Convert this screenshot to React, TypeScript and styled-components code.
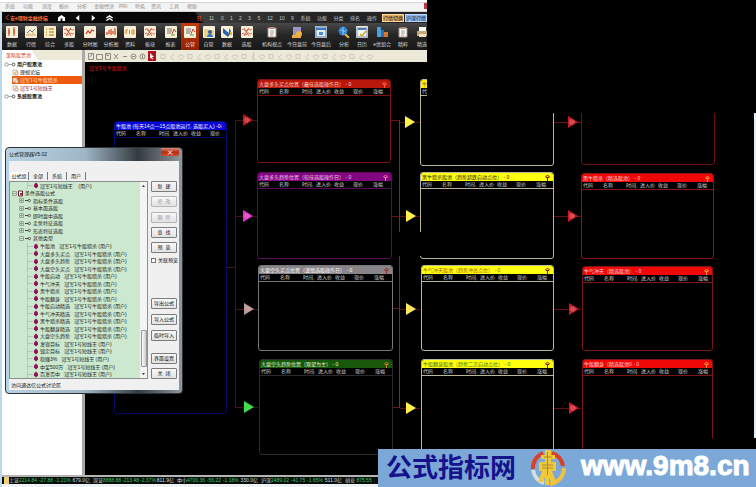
import React from 'react';
import styled, { createGlobalStyle, css } from 'styled-components';

const Global = createGlobalStyle`
  *, *::before, *::after { box-sizing: border-box; }
  html, body { margin: 0; background: #000; }
  body {
    font-family: "Liberation Sans", "Noto Sans CJK SC", sans-serif;
    font-size: 5px;
    line-height: 8px;
    color: #ddd;
    overflow: hidden;
  }
  button, input, table { font: inherit; color: inherit; }
  button { padding: 0; border: 0; background: none; white-space: nowrap; }
`;

const Shell = styled.div`
  position: relative;
  display: flex;
  flex-direction: column;
  min-height: 100vh;
  overflow: hidden;
`;

const Header = styled.header`
  max-width: 427px;
  overflow: hidden;
  white-space: nowrap;
`;

const MenuBar = styled.nav`
  display: flex;
  align-items: center;
  height: 12px;
  padding-left: 5px;
  background: linear-gradient(#fff 0 2px, #d8d8d8 2px 3px, #f3f3f3 3px);
  border-bottom: 1px solid #d5d5d5;
`;

const MenuItem = styled.button<{ $w: number }>`
  flex: 0 0 ${p => p.$w}px;
  text-align: left;
  color: #8c8c8c;
`;

const WindowClose = styled.button`
  width: 3px;
  height: 6px;
  margin-left: auto;
  background: #b9384a;
`;

const TitleBar = styled.div`
  display: flex;
  align-items: center;
  height: 11px;
  padding-left: 3px;
  background: linear-gradient(56deg, #070707 0 46%, #3c3c3c 47%, #242424 75%);
  border-left: 2px solid #cfe0ea;
`;

const Brand = styled.div`
  display: flex;
  align-items: center;
  gap: 1px;
  width: 50px;
  color: #ff7038;
  font-weight: bold;
`;

const NavButton = styled.button`
  flex: 0 0 16px;
  height: 10px;
  line-height: 0;
`;

const Quick = styled.div`
  display: flex;
  margin-left: 76px;
`;

const QuickItem = styled.button<{ $w: number; $hot?: boolean }>`
  flex: 0 0 ${p => p.$w}px;
  text-align: center;
  color: ${p => (p.$hot ? '#ff5418' : '#c9c9c9')};
`;

const Switch = styled.button<{ $blue?: boolean }>`
  flex: none;
  height: 8px;
  width: 22px;
  margin-left: 1px;
  line-height: 6px;
  color: #111;
  border: 1px solid ${p => (p.$blue ? '#bdd9ff' : '#ffd79a')};
  background: ${p => (p.$blue ? '#8db5e8' : '#e0ad68')};
`;

const ToolBar = styled.div`
  display: flex;
  height: 27px;
  background: linear-gradient(#484848, #262626 45%, #171717);
  border-left: 2px solid #cfe0ea;
`;

const Tool = styled.button<{ $w: number; $active?: boolean }>`
  flex: 0 0 ${p => p.$w}px;
  display: flex;
  flex-direction: column;
  align-items: center;
  padding-top: 3px;
  gap: 2px;
  color: #d6d6d6;
  overflow: visible;
  ${p => p.$active && css`background: linear-gradient(#c63a0c, #8f2206); color: #ffd9c0;`}
  svg { display: block; }
`;

const Body = styled.div`
  display: flex;
  flex: 1;
  min-height: 0;
`;

const Side = styled.aside`
  flex: 0 0 85px;
  background: #fff;
  border-left: 2px solid #bcd9ea;
  border-right: 3px solid #a9a9a9;
`;

const SideTab = styled.div`
  height: 10px;
  background: #ece9d8;
  line-height: 11px;
`;

const SideTabButton = styled.button`
  width: 36px;
  height: 10px;
  padding-left: 4px;
  text-align: left;
  color: #cf4c22;
  background: #fff;
  clip-path: polygon(0 0, 82% 0, 100% 100%, 0 100%);
`;

const Tree = styled.ul`
  margin: 0;
  padding: 0;
  list-style: none;
`;

const TreeItem = styled.li<{ $child?: boolean; $active?: boolean; $tint?: string }>`
  display: flex;
  align-items: center;
  gap: 1px;
  height: 8px;
  margin-left: ${p => (p.$child ? 10 : 2)}px;
  white-space: nowrap;
  color: ${p => p.$tint || '#111'};
  font-weight: ${p => (p.$child ? 400 : 700)};
  ${p => p.$active && css`background: #ee5a0c;`}
`;

const Work = styled.main`
  flex: 1;
  min-width: 0;
  display: flex;
  flex-direction: column;
`;

const DrawBar = styled.div`
  display: flex;
  align-items: center;
  height: 12px;
  max-width: 342px;
  background: #ece9d8;
  overflow: hidden;
  svg { display: block; flex: none; }
`;

const Canvas = styled.section`
  position: relative;
  flex: 1;
  margin-left: 1px;
  background: #000;
  overflow: hidden;
`;

const PoolName = styled.h1`
  margin: 0;
  padding: 2px 3px;
  font-size: 5px;
  font-weight: 400;
  line-height: 8px;
  color: #e01414;
`;

const Wires = styled.svg`
  position: absolute;
  left: 0;
  top: 0;
`;

const Node = styled.article<{ $x: number; $y: number; $w: number; $h: number; $line: string }>`
  position: absolute;
  left: ${p => p.$x}px;
  top: ${p => p.$y}px;
  width: ${p => p.$w}px;
  height: ${p => p.$h}px;
  border: 1px solid ${p => p.$line};
  border-radius: 3px;
  overflow: hidden;
`;

const NodeTitle = styled.header<{ $bg: string; $ink: string }>`
  display: flex;
  align-items: center;
  justify-content: space-between;
  height: 8px;
  padding: 0 3px 0 1px;
  background: ${p => p.$bg};
  color: ${p => p.$ink};
  white-space: nowrap;
`;

const NodeTable = styled.table<{ $line: string }>`
  table-layout: fixed;
  width: 100%;
  border-collapse: collapse;
  border-bottom: 1px solid ${p => p.$line};
  th {
    height: 7px;
    padding: 0 0 0 1px;
    font-weight: 400;
    line-height: 7px;
    text-align: left;
    white-space: nowrap;
    color: #cfcfcf;
  }
`;

const Cover = styled.div<{ $x: number; $y: number; $w: number; $h: number }>`
  position: absolute;
  left: ${p => p.$x}px;
  top: ${p => p.$y}px;
  width: ${p => p.$w}px;
  height: ${p => p.$h}px;
  background: #000;
`;

const Edge = styled.div`
  position: absolute;
  right: 0;
  top: 51px;
  bottom: 37px;
  width: 2px;
  background: #e4eef2;
`;

const Footer = styled.footer`
  display: flex;
  align-items: center;
  height: 12px;
  padding-left: 2px;
  background: linear-gradient(#b5b5b5 0 2px, #0b0f0b 2px 9px, #eef3f6 9px);
  border-left: 2px solid #bcd9ea;
  line-height: 7px;
  white-space: nowrap;
  overflow: hidden;
`;

const Flag = styled.i`
  width: 5px;
  height: 7px;
  margin-bottom: 1px;
  background: #f3cf74;
`;

const Quote = styled.span`
  flex: 0 0 84px;
  display: flex;
  justify-content: space-between;
  padding-right: 3px;
  padding-bottom: 1px;
  color: #d8d8d8;
`;

const Down = styled.b`
  font-weight: 400;
  color: #35c463;
`;

const Dialog = styled.section`
  position: absolute;
  left: 5px;
  top: 147px;
  width: 178px;
  height: 247px;
  display: flex;
  flex-direction: column;
  padding: 0 3px 3px;
  border: 1px solid #2e3336;
  border-radius: 4px;
  color: #111;
  background: linear-gradient(90deg, #b9d3e4, #9fb6c6 45%, #343b40 75%, #8f989e);
`;

const DialogBar = styled.header`
  display: flex;
  justify-content: space-between;
  height: 13px;
  line-height: 12px;
  color: #0b1a26;
`;

const DialogClose = styled.button`
  width: 18px;
  height: 8px;
  line-height: 0;
  border-radius: 0 0 2px 2px;
  background: linear-gradient(#d98a78, #b92c14 50%, #d2492c);
`;

const DialogBody = styled.div`
  flex: 1;
  display: flex;
  flex-direction: column;
  padding: 11px 2px 0 0;
  background: #f0f0f0;
`;

const Tabs = styled.div`
  display: flex;
  height: 9px;
  padding-left: 1px;
`;

const Tab = styled.button<{ $active?: boolean }>`
  width: 19px;
  height: 8px;
  border-right: 1px solid #777;
  ${p => p.$active && css`background: #fafafa;`}
`;

const DialogMain = styled.div`
  display: flex;
  height: 198px;
  gap: 3px;
`;

const ListBox = styled.div`
  flex: 1;
  display: flex;
  border: 1px solid #8b8f94;
  background: #cce8cf;
`;

const Formulas = styled.ul`
  flex: 1;
  display: flex;
  flex-direction: column;
  margin: 0;
  padding: 0;
  list-style: none;
`;

const Formula = styled.li<{ $level: number }>`
  flex: 1;
  min-height: 0;
  display: flex;
  align-items: center;
  gap: 2px;
  padding-left: ${p => [1, 8, 16][p.$level]}px;
  white-space: pre;
  color: #1c241d;
`;

const Scroll = styled.div`
  width: 7px;
  display: flex;
  flex-direction: column;
  align-items: center;
  justify-content: space-between;
  background: #f4f4f4;
  svg { display: block; }
`;

const Thumb = styled.div`
  width: 6px;
  height: 37px;
  margin-top: auto;
  margin-bottom: 4px;
  border: 1px solid #999;
  border-radius: 1px;
  background: linear-gradient(90deg, #fafafa, #ccc);
`;

const Actions = styled.div`
  width: 26px;
  display: flex;
  flex-direction: column;
`;

const Group = styled.div<{ $h: number; $gap?: number }>`
  display: flex;
  flex-direction: column;
  justify-content: space-between;
  height: ${p => p.$h}px;
  margin-bottom: ${p => p.$gap || 0}px;
`;

const Action = styled.button`
  height: 11px;
  line-height: 9px;
  border: 1px solid #7c7c7c;
  border-radius: 1px;
  background: linear-gradient(#f8f8f8, #e2e2e2);
  color: #111;
  white-space: pre;
  &:disabled { color: #999; border-color: #b5b5b5; }
`;

const Check = styled.label`
  display: flex;
  align-items: center;
  gap: 2px;
  height: 8px;
  margin: 3px 0 34px;
  white-space: nowrap;
  input {
    appearance: none;
    flex: none;
    width: 5px;
    height: 5px;
    margin: 0;
    border: 1px solid #777;
    background: #fff;
  }
`;

const DialogStatus = styled.footer`
  padding: 2px 0 0 2px;
`;

const Banner = styled.a`
  position: absolute;
  right: 0;
  bottom: 0;
  display: flex;
  align-items: center;
  width: 378px;
  height: 38px;
  padding-left: 8px;
  background: #7ca8d8;
  text-decoration: none;
  line-height: 36px;
  white-space: nowrap;
`;

const BannerName = styled.strong`
  width: 143px;
  font-family: "Noto Sans CJK SC", sans-serif;
  font-size: 26px;
  line-height: 30px;
  padding-bottom: 4px;
  color: #15128c;
`;

const BannerUrl = styled.strong`
  margin-left: 14px;
  font-size: 28px;
  line-height: 34px;
  padding-bottom: 4px;
  color: #fff;
  -webkit-text-stroke: 1px #fff;
`;

type Kind = string;

const tileArt: Record<Kind, React.ReactNode> = {
  candle: <><path d="M3 2v8M8 1v9" stroke="#d23a1e" /><path d="M2 4h2v4H2zM7 3h2v5H7z" fill="#d96a3c" /></>,
  line: <><path d="M2 7l3-3 2 2 3-3" stroke="#777" /><path d="M2 10V8M4 10V7M6 10V8M8 10V6M10 10V8" stroke="#d5a35c" /></>,
  list: <path d="M2 3h1M5 3h5M2 6h1M5 6h5M2 9h1M5 9h5" stroke="#c99a20" strokeWidth="1.4" />,
  wave: <path d="M1 4c2-3 3 3 5 0s3 2 5-1M1 8c2-3 3 3 5 0s3 2 5-1M3 2l5 8M8 2L3 10" stroke="#c4442c" strokeWidth=".8" />,
  rise: <path d="M2 8l2-3 2 2 2-3 2 1" stroke="#d0391e" strokeWidth="1.2" />,
  bars: <path d="M2 9V6M4 8V4M6 9V3M8 8V5M10 9V2" stroke="#d23c20" strokeWidth="1.2" />,
  page: <path d="M2 4v4M2 4h2M2 6h1M5.500 4v4M8 4h2v4H8z" stroke="#d08a20" />,
  note: <><path d="M2 3h5M2 5h5M2 7h4" stroke="#777" /><path d="M7 8l2-5 2 3" stroke="#cf4224" /><path d="M6 9h4" stroke="#4f9d41" /></>,
  user: <><path d="M1 3h4l1 1h5v7H1z" fill="#ead28a" /><circle cx="7" cy="6" r="2" fill="#315f9c" /><path d="M4 11c0-4 6-4 6 0z" fill="#3675c5" /></>,
  bird: <><path d="M2 2l7 6-2 3-5-4zM8 2l2 3-2 5" fill="#2866b0" /><path d="M9 6h2v3H9z" fill="#edb53e" /></>,
  clip: <><path d="M2 2h8v9H2z" fill="#fff" stroke="#b08a7a" /><path d="M4 5h4M4 7h4M4 9h3" stroke="#998" /><path d="M4 1h4v2H4z" fill="#ad8a78" /></>,
  picture: <><path d="M2 1h8v8H2z" fill="#9a95c4" /><circle cx="8" cy="8" r="3" fill="#f2b43d" /><path d="M1 9h9v3H1z" fill="#edab48" /></>,
  calendar: <><path d="M1 1h10v10H1z" fill="#e4eef9" stroke="#4a79b5" /><path d="M1 2h10v2H1z" fill="#3e78be" /><path d="M4 6h4v3H4z" fill="#4e8bd2" /></>,
  globe: <><circle cx="5" cy="5" r="4.5" fill="#2f7fc9" /><path d="M2 5c2-4 4 4 6-1M5 1v8" stroke="#8dd4ff" /><path d="M7 8l4 4" stroke="#e9b94d" strokeWidth="2" /></>,
  plan: <><path d="M1 2h10v9H1z" fill="#f7f7f7" stroke="#718db8" /><path d="M2 3h8" stroke="#507dc0" strokeWidth="2" /><path d="M4 8l2 2 4-5" stroke="#d3a21e" strokeWidth="1.5" /></>,
  blocks: <><path d="M1 1h4v10H1z" fill="#4aa1d8" /><path d="M5 4h3v7H5z" fill="#2f6fb5" /><path d="M8 6h4v5H8z" fill="#d8742c" /></>,
  printer: <><path d="M3 1h7v5H3z" fill="#fff" /><path d="M1 5h11v5H1z" fill="#c8a878" /><path d="M3 8h7v3H3z" fill="#f3e3bb" /></>,
};

const bare = ['picture', 'globe', 'blocks', 'printer', 'clip'];

function ToolIcon({ kind }: { kind: Kind }) {
  return (
    <svg width="12" height="12" viewBox="0 0 12 12" fill="none" aria-hidden="true">
      {!bare.includes(kind) && <rect width="12" height="12" rx="1" fill="#f8efd9" />}
      {tileArt[kind]}
    </svg>
  );
}

const menu: [string, number][] = [['系统', 18], ['功能', 19], ['深度', 17], ['报价', 18], ['分析', 17], ['金融经济', 25], ['PRI', 16], ['特色', 16], ['资讯', 18], ['工具', 18], ['帮助', 12]];

const quick: [string, number][] = [['日', 12], ['11', 13], ['0', 9], ['1', 9], ['2', 9], ['3', 9], ['5', 10], ['12', 12], ['10', 12], ['9', 9], ['系统', 17], ['功能', 16], ['分类', 17], ['排名', 16], ['操作', 18]];

const tools: [string, Kind, number][] = [
  ['数据', 'candle', 20], ['行情', 'line', 18], ['综合', 'list', 20], ['多股', 'wave', 18],
  ['分时图', 'rise', 24], ['分析图', 'bars', 18], ['资料', 'page', 20], ['板块', 'wave', 20],
  ['报表', 'note', 21], ['公管', 'note', 18], ['自管', 'user', 19], ['数据', 'bird', 18],
  ['选股', 'wave', 21], ['机构视点', 'clip', 30], ['今日盘前', 'picture', 20], ['今日盘后', 'calendar', 28],
  ['分析', 'globe', 18], ['日历', 'plan', 18], ['e优组合', 'blocks', 22], ['精粹', 'clip', 20], ['精选', 'printer', 18],
];

const cols = ['代码', '名称', '时间,', '进入价', '收益', '现价', '涨幅'];
const colWidths = [20, 23, 14, 18, 19, 20, 18];

interface Pool { t: string; x: number; y: number; w: number; h: number; bg: string; line: string; ink?: string; mark?: string; short?: boolean }

const pools: Pool[] = [
  { t: '牛股池 (每天14点—15点股池运行, 选股买入) -0', x: 28, y: 59, w: 113, h: 293, bg: '#0707d8', line: '#080866', ink: '#fff', mark: '#ff7080', short: true },
  { t: '大盘多头买点位置（最佳选股操作日） - 0', x: 171, y: 17, w: 134, h: 84, bg: '#b8180c', line: '#7d1010', ink: '#ffd5cc', mark: '#ff6048' },
  { t: '大盘多头趋势位置（较佳选股操作日） - 0', x: 171, y: 110, w: 135, h: 87, bg: '#820680', line: '#5c0a5c', ink: '#f5c8f2', mark: '#ff6f9f' },
  { t: '大盘空头买点位置（谨慎选股操作日） - 0', x: 172, y: 203, w: 135, h: 86, bg: '#888487', line: '#777', ink: '#fff', mark: '#a32222' },
  { t: '大盘空头趋势位置（观望为主） - 0', x: 173, y: 297, w: 134, h: 96, bg: '#17580b', line: '#2b2b2b', ink: '#e2f5d8', mark: '#d07a2a' },
  { t: '牛股启动股池（趋势启动点位） - 0', x: 334, y: 17, w: 134, h: 87, bg: '#fff200', line: '#b9b796', ink: '#8c5c10', mark: '#b02010' },
  { t: '黑牛猎杀股池（趋势超跌启动点位） - 0', x: 334, y: 110, w: 134, h: 87, bg: '#ffff10', line: '#b9b796', ink: '#222', mark: '#8a1010' },
  { t: '牛气冲天股池（趋势冲高点位） - 0', x: 335, y: 203, w: 133, h: 86, bg: '#ffff10', line: '#b9b796', ink: '#a4571b', mark: '#a01010' },
  { t: '牛股翻身股池（趋势二次启动点位） - 0', x: 335, y: 297, w: 133, h: 100, bg: '#ffff10', line: '#b9b796', ink: '#38721b', mark: '#a01010' },
  { t: '牛股启动（精选股池） - 0', x: 495, y: 17, w: 134, h: 86, bg: '#f00808', line: '#6b1212', ink: '#ffd5d0' },
  { t: '黑牛猎杀（精选股池） - 0', x: 495, y: 111, w: 133, h: 86, bg: '#f00808', line: '#8c1414', ink: '#ffd5d0', mark: '#ff9a3c' },
  { t: '牛气冲天（精选股池） - 0', x: 496, y: 204, w: 131, h: 85, bg: '#f00808', line: '#7a1616', ink: '#ffd5d0', mark: '#ff9a3c' },
  { t: '牛股翻身（精选股池0 - 0', x: 496, y: 297, w: 131, h: 100, bg: '#f00808', line: '#7a1616', ink: '#ffd5d0', mark: '#ff9a3c' },
];

const arrows: [number, number, string, boolean][] = [
  [158, 58, '#b8161c', true], [158, 154, '#e030d8', true], [159, 247, '#b39a9c', true], [159, 345, '#42dc4c', false],
  [320, 60, '#fff04a', false], [321, 154, '#fff04a', false], [321, 247, '#ffe860', false], [321, 346, '#fff04a', false],
  [483, 60, '#c81a24', true], [483, 154, '#c81a24', true], [484, 247, '#c81a24', true], [484, 346, '#c81a24', true],
];

function PoolNode({ p }: { p: Pool }) {
  const shown = p.short ? cols.slice(0, 6) : cols;
  return (
    <Node $x={p.x} $y={p.y} $w={p.w} $h={p.h} $line={p.line}>
      <NodeTitle $bg={p.bg} $ink={p.ink || '#fff'}>
        <span>{p.t}</span>
        {p.mark && (
          <svg width="5" height="7" viewBox="0 0 5 7" fill="none" stroke={p.mark}>
            <path d="M.5 3L2.5 1l2 2-2 1zM2.5 3v4" />
          </svg>
        )}
      </NodeTitle>
      <NodeTable $line={p.line}>
        <colgroup>{shown.map((c, i) => <col key={c} width={i === shown.length - 1 ? undefined : colWidths[i]} />)}</colgroup>
        <thead><tr>{shown.map(c => <th key={c} scope="col">{c}</th>)}</tr></thead>
      </NodeTable>
    </Node>
  );
}

function Connectors() {
  return (
    <Wires width="670" height="413" fill="none" aria-hidden="true">
      <path d="M141 205.500h8M149.500 58v287M149 58.500h22M149 154.500h22M149 247.500h23M149 345.500h23" stroke="#45140c" />
      <path d="M305 58.500h9M306 154.500h8M307 246.500h7M307 345.500h7" stroke="#6a1010" />
      <path d="M313.500 58v288" stroke="#b01414" />
      <path d="M314 60.500h20M314 154.500h20M314 247.500h20M314 346.500h20" stroke="#571010" />
      <path d="M468 60.500h27M468 154.500h27M468 247.500h27M468 346.500h27" stroke="#641010" />
      {arrows.map(([x, y, c, g], i) => (
        <g key={i}>
          <path d={`M${x - 1} ${y - 6}l10 6-10 6z`} fill={c} />
          {g && <path d={`M${x + 1} ${y - 2}h3v4h-3zM${x + 1} ${y}h5`} stroke="#f3a0a0" strokeWidth=".5" />}
        </g>
      ))}
    </Wires>
  );
}

const g1 = '冠军1号牛股猎杀 (用户)';
const g2 = '冠军1号短线王 (用户)';
const formulas: [number, string][] = [
  [2, '冠军1号短线王    (用户)'], [0, '条件选股公式'], [1, '指标条件选股'], [1, '基本面选股'], [1, '即时盘中选股'],
  [1, '走势特征选股'], [1, '形态特征选股'], [1, '其他类型'],
  ...['牛股池', '大盘多头买点', '大盘多头趋势', '大盘空头买点', '牛股启动', '牛气冲天', '黑牛猎杀', '牛股翻身', '牛股启动精选', '牛气冲天精选', '黑牛猎杀精选', '牛股翻身精选', '大盘空头趋势'].map(n => [2, `${n}   ${g1}`] as [number, string]),
  ...['发现目标', '锁定目标', '稳赚3%', '中奖500万', '百发百中'].map(n => [2, `${n}   ${g2}`] as [number, string]),
];

function TreeGlyph({ level, open }: { level: number; open?: boolean }) {
  if (level === 2) {
    return (
      <svg width="12" height="7" viewBox="0 0 12 7" fill="none">
        <path d="M1.500 0v7M2 3.500h5" stroke="#9fb3a1" strokeWidth=".6" />
        <path d="M10 .5l2 2v2l-2 2-2-2v-2z" fill="#8c1458" />
      </svg>
    );
  }
  if (level === 0) {
    return (
      <svg width="12" height="7" viewBox="0 0 12 7" fill="none">
        <path d="M1.500 1.500h4v4h-4zM2 3.500h3" stroke="#7e8c80" strokeWidth=".7" />
        <path d="M7.500 1h4v5h-4z" fill="#fff" stroke="#632028" /><path d="M9 3h2v2H9z" fill="#c02030" />
      </svg>
    );
  }
  return (
    <svg width="13" height="7" viewBox="0 0 13 7" fill="none">
      <path d={`M1.500 1.500h4v4h-4zM2 3.500h3${open ? '' : 'M3.500 2v3'}`} stroke="#7e8c80" strokeWidth=".7" />
      <path d="M7 3.500h3" stroke="#444" /><circle cx="11.300" cy="3.500" r="1.200" stroke="#444" strokeWidth=".8" />
    </svg>
  );
}

function FormulaDialog() {
  return (
    <Dialog role="dialog" aria-label="公式管理器">
      <DialogBar>
        <span>公式管理器V5.02</span>
        <DialogClose aria-label="关闭">
          <svg width="6" height="5" viewBox="0 0 6 5"><path d="M1 .5l4 4M5 .5l-4 4" stroke="#fff" /></svg>
        </DialogClose>
      </DialogBar>
      <DialogBody>
        <Tabs role="tablist">
          {['公式组', '全部', '系统', '用户'].map((t, i) => <Tab key={t} role="tab" $active={i === 0}>{t}</Tab>)}
        </Tabs>
        <DialogMain>
          <ListBox>
            <Formulas>
              {formulas.map(([l, t]) => (
                <Formula key={t} $level={l}><TreeGlyph level={l} open={t === '其他类型'} />{t}</Formula>
              ))}
            </Formulas>
            <Scroll>
              <svg width="7" height="8" viewBox="0 0 7 8"><path d="M2 5l1.500-2L5 5z" fill="#333" /></svg>
              <Thumb />
              <svg width="7" height="7" viewBox="0 0 7 7"><path d="M2 2l1.500 2L5 2z" fill="#333" /></svg>
            </Scroll>
          </ListBox>
          <Actions>
            <Group $h={72}>
              <Action>新  建</Action>
              <Action disabled>修  改</Action>
              <Action disabled>删  除</Action>
              <Action>查  找</Action>
              <Action>预  览</Action>
            </Group>
            <Check><input type="checkbox" />关联预览</Check>
            <Group $h={43} $gap={12}>
              <Action>导出公式</Action>
              <Action>导入公式</Action>
              <Action>临时导入</Action>
            </Group>
            <Group $h={26}>
              <Action>界面设置</Action>
              <Action>关  闭</Action>
            </Group>
          </Actions>
        </DialogMain>
        <DialogStatus>访问通达信公式讨论区</DialogStatus>
      </DialogBody>
    </Dialog>
  );
}

function KeyGlyph() {
  return (
    <svg width="12" height="7" viewBox="0 0 12 7" fill="none">
      <path d="M1 2h3v3H1zM4 3.500h4" stroke="#999" strokeWidth=".8" /><circle cx="9.500" cy="3.500" r="1.400" stroke="#555" />
    </svg>
  );
}

function LeafGlyph() {
  return (
    <svg width="7" height="7" viewBox="0 0 7 7" fill="none">
      <path d="M1 1h4v4H1z" fill="#fff" stroke="#b9a184" strokeWidth=".8" /><path d="M3 3h3v3H3z" fill="#f8f0e0" stroke="#c59876" strokeWidth=".8" />
    </svg>
  );
}

const quotes: [string, string, string, string, string][] = [
  ['上证', '2214.84', '-27.88', '-1.21%', '679.0亿'],
  ['深证', '8888.88', '-213.48', '-2.37%', '811.9亿'],
  ['中小', '4700.36', '-56.22', '-1.18%', '330.0亿'],
  ['沪深', '2489.02', '-41.75', '-1.65%', '511.0亿'],
];

const navPaths = ['M1 4l4-3 4 3v4H6V5H4v3H1z', 'M7 1v7L3 4.500z', 'M3 1v7l4-3.500z', 'M1 4l4-3 4 3-1 1-3-2-3 2zM1 7l4-3 4 3-1 1-3-2-3 2z'];
const navLabels = ['主页', '后退', '前进', '置顶'];

export default function App() {
  return (
    <Shell>
      <Global />
      <Header>
        <MenuBar>
          {menu.map(([t, w]) => <MenuItem key={t} $w={w}>{t}</MenuItem>)}
          <WindowClose aria-label="关闭窗口" />
        </MenuBar>
        <TitleBar>
          <Brand>
            <svg width="4" height="7" viewBox="0 0 4 7"><path d="M4 .5L1 3.500l3 3" fill="none" stroke="#e04c20" /></svg>
            安e理财金融终端
          </Brand>
          {navPaths.map((d, i) => (
            <NavButton key={d} aria-label={navLabels[i]}>
              <svg width="9" height="8" viewBox="0 0 10 9"><path d={d} fill="#fff" /></svg>
            </NavButton>
          ))}
          <Quick>
            {quick.map(([t, w], i) => <QuickItem key={t} $w={w} $hot={i === 0}>{t}</QuickItem>)}
          </Quick>
          <Switch>行情切换</Switch>
          <Switch $blue>沪深行情</Switch>
        </TitleBar>
        <ToolBar>
          {tools.map(([t, k, w], i) => (
            <Tool key={i} $w={w} $active={t === '公管'}><ToolIcon kind={k} />{t}</Tool>
          ))}
        </ToolBar>
      </Header>
      <Body>
        <Side>
          <SideTab><SideTabButton>策略股票池</SideTabButton></SideTab>
          <Tree>
            <TreeItem><KeyGlyph />用户股票池</TreeItem>
            <TreeItem $child><LeafGlyph />理想论坛</TreeItem>
            <TreeItem $child $active $tint="#ffe2c4"><LeafGlyph />冠军1号牛股猎杀</TreeItem>
            <TreeItem $child $tint="#a02818"><LeafGlyph />冠军1号短线王</TreeItem>
            <TreeItem><KeyGlyph />系统股票池</TreeItem>
          </Tree>
        </Side>
        <Work>
          <DrawBar>
            <svg width="342" height="12" viewBox="0 0 342 12" fill="none">
              <g stroke="#8e8b80">
                <path d="M3.500 3.500h5v6h-5zM5 7l3-4M11.500 4.500h6v5h-6zM20.500 3.500h5v6h-5zM22 3.500v2h2M29 4l4 5M33 4l-4 5M38 6.500h4" />
                <circle cx="48.500" cy="6.500" r="2.500" /><circle cx="57.500" cy="6.500" r="2.500" /><path d="M47 6.500h3M57.500 5v3" />
              </g>
              <path d="M63 1h8v10h-8z" fill="#b3121c" /><path d="M65 3l4 4h-2l1 2-1 .5-1-2-1 1z" fill="#fff" />
              <g stroke="#cbc8ba">
                {Array.from({ length: 24 }, (_, i) => (
                  <path key={i} d={i % 3 === 0 ? `M${76 + i * 9} 4.500h4v4h-4z` : i % 3 === 1 ? `M${76 + i * 9} 8l4-4M${77 + i * 9} 9h3` : `M${75 + i * 9} 6.500l3-2 3 2-3 3z`} />
                ))}
                <path d="M168.500 2v8" />
              </g>
            </svg>
          </DrawBar>
          <Canvas>
            <PoolName>冠军1号牛股猎杀</PoolName>
            <Connectors />
            {pools.map(p => <PoolNode key={p.t} p={p} />)}
            <Cover $x={341} $y={0} $w={329} $h={51} />
            <Cover $x={307} $y={170} $w={74} $h={24} />
            <Cover $x={500} $y={376} $w={170} $h={37} />
            <Edge />
          </Canvas>
        </Work>
      </Body>
      <Footer>
        <Flag />
        {quotes.map(q => (
          <Quote key={q[0]}><span>{q[0]}<Down>{q[1]}</Down></span><Down>{q[2]}</Down><Down>{q[3]}</Down><span>{q[4]}</span></Quote>
        ))}
        <Quote><span>创业 <Down>875.55</Down></span></Quote>
      </Footer>
      <FormulaDialog />
      <Banner href="#home">
        <BannerName>公式指标网</BannerName>
        <svg width="38" height="38" viewBox="0 0 38 38" fill="none" aria-hidden="true">
          <g strokeWidth="4">
            <path d="M4 20A16 16 0 0 1 14 4" stroke="#d9402c" />
            <path d="M23 4A16 16 0 0 1 34 17" stroke="#d9402c" />
            <path d="M35 19A16 16 0 0 1 21 35" stroke="#efc13c" />
            <path d="M4 21A16 16 0 0 0 15 34" stroke="#d5dde6" />
          </g>
          <path d="M16 1h6v5h4v4h-4v3h5v9h-4l4 11h-5l-2-5v8h-4v-8l-2 5H9l4-11h-3v-9h6v-3h-4V6h4z" fill="#efc93a" />
          <path d="M13 16h11M13 19h11M18.500 3v23M15 8h8" stroke="#a58a3d" />
        </svg>
        <BannerUrl>www.9m8.cn</BannerUrl>
      </Banner>
    </Shell>
  );
}
